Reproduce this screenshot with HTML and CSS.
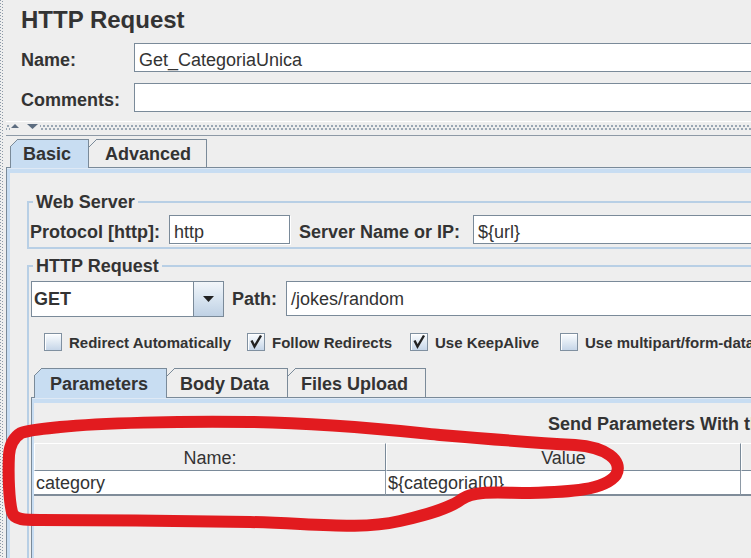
FILE: index.html
```html
<!DOCTYPE html>
<html lang="pt">
<head>
<meta charset="utf-8">
<title>HTTP Request</title>
<link rel="stylesheet" href="styles.css">
</head>
<body>
<div class="app">
  <div class="vsplit"></div>
  <div class="main">
    <div class="head">
      <h1 class="title">HTTP Request</h1>
      <div class="form">
        <span class="lbl">Name:</span>
        <div class="field">Get_CategoriaUnica</div>
        <span class="lbl">Comments:</span>
        <div class="field"></div>
      </div>
    </div>
    <div class="hsplit">
      <svg class="split-arrows" width="30" height="13" viewBox="0 0 30 13">
        <rect x="0" y="0" width="30" height="13" fill="#eeeeee"/>
        <polygon points="1,6 5,2 9,6" fill="#5d6d80"/>
        <polygon points="17,2 28,2 22.5,7" fill="#5d6d80"/>
      </svg>
    </div>

    <div class="tabpane outer">
      <div class="tabstrip">
        <div class="tab-gap"></div>
        <div class="tab sel t-basic">Basic</div>
        <div class="tab next t-adv">Advanced</div>
        <div class="tab-fill"></div>
      </div>
      <div class="tabbody">
        <fieldset class="group ws">
          <legend>Web Server</legend>
          <div class="row">
            <span class="lbl l-proto">Protocol [http]:</span>
            <div class="field f-proto">http</div>
            <span class="lbl l-server">Server Name or IP:</span>
            <div class="field grow">${url}</div>
          </div>
        </fieldset>

        <fieldset class="group req">
          <legend>HTTP Request</legend>
          <div class="row">
            <div class="combo">
              <div class="combo-val">GET</div>
              <div class="combo-btn">
                <svg width="11" height="6" viewBox="0 0 11 6"><polygon points="0,0 11,0 5.5,6" fill="#222"/></svg>
              </div>
            </div>
            <span class="lbl l-path">Path:</span>
            <div class="field tall grow">/jokes/random</div>
          </div>

          <div class="checks">
            <div class="chk"><span class="box"></span><span class="ct">Redirect Automatically</span></div>
            <div class="chk"><span class="box"><svg width="16" height="16" viewBox="0 0 16 16"><polyline points="3.5,6.5 6.5,12.5 13,1.5" fill="none" stroke="#222" stroke-width="2.4"/></svg></span><span class="ct">Follow Redirects</span></div>
            <div class="chk"><span class="box"><svg width="16" height="16" viewBox="0 0 16 16"><polyline points="3.5,6.5 6.5,12.5 13,1.5" fill="none" stroke="#222" stroke-width="2.4"/></svg></span><span class="ct">Use KeepAlive</span></div>
            <div class="chk"><span class="box"></span><span class="ct">Use multipart/form-data</span></div>
          </div>

          <div class="tabpane inner">
            <div class="tabstrip">
              <div class="tab-gap"></div>
              <div class="tab sel t-params">Parameters</div>
              <div class="tab next t-body">Body Data</div>
              <div class="tab next t-files">Files Upload</div>
              <div class="tab-fill"></div>
            </div>
            <div class="tabbody">
              <div class="sendwith">Send Parameters With the Request:</div>
              <table class="params">
                <colgroup><col class="c1"><col class="c2"><col class="c3"></colgroup>
                <thead>
                  <tr><th>Name:</th><th>Value</th><th></th></tr>
                </thead>
                <tbody>
                  <tr><td>category</td><td>${categoria[0]}</td><td></td></tr>
                </tbody>
              </table>
            </div>
          </div>
        </fieldset>
      </div>
    </div>
  </div>
</div>

<svg class="annot" width="751" height="558" viewBox="0 0 751 558">
  <path d="M21,433 C16,436 10,442 9,455 C8,475 9,500 12,512 C14,520 25,520 40,520 C100,520 200,521 250,522 C320,524 360,530 400,521 C430,514 450,508 462,499 C475,490 500,493 530,493 C570,492 605,490 616,475 C624,460 605,447 575,445 C540,443 500,440 440,435 C400,431 330,423 250,422 C180,421 100,423 60,427 C40,429 28,430 21,433" fill="none" stroke="#e21b1f" stroke-width="12" stroke-linecap="round" stroke-linejoin="round"/>
</svg>
</body>
</html>
```

FILE: styles.css
```css
html, body {
  margin: 0;
  padding: 0;
  overflow: hidden;
  background: #eeeeee;
}

body {
  position: relative;
  width: 751px;
  height: 558px;
  font-family: "Liberation Sans", Arial, sans-serif;
  color: #333333;
}

.app {
  display: flex;
  width: 1000px;
  height: 558px;
}

.vsplit {
  flex: none;
  width: 4px;
  height: 100%;
  background-image:
    linear-gradient(#8c99a7 1px, transparent 1px),
    linear-gradient(#8c99a7 1px, transparent 1px);
  background-size: 1px 3px, 1px 3px;
  background-position: 0 0, 2px 1px;
  background-repeat: repeat-y;
}

.main {
  flex: 1;
  min-width: 0;
  padding-left: 2px;
}

/* ---------- header ---------- */
.head {
  padding: 6px 0 0 15px;
}

.title {
  margin: 0;
  font-size: 24px;
  line-height: 28px;
  font-weight: bold;
}

.form {
  display: grid;
  grid-template-columns: 113px 1fr;
  row-gap: 11px;
  margin-top: 9px;
}

.lbl {
  flex: none;
  font-weight: bold;
  font-size: 18px;
  line-height: 23px;
  padding-top: 6px;
  white-space: nowrap;
}

.field {
  height: 29px;
  box-sizing: border-box;
  border: 1px solid #7a8a99;
  background: #ffffff;
  padding: 5px 0 0 4px;
  font-size: 18px;
  line-height: 22px;
  white-space: nowrap;
  overflow: hidden;
}

.grow {
  flex: 1;
  min-width: 0;
}

/* ---------- split divider ---------- */
.hsplit {
  display: flex;
  margin-top: 9px;
  height: 13px;
  padding-left: 4px;
  border-top: 1px solid #ffffff;
  border-bottom: 1px solid #8d99a6;
  background-image:
    linear-gradient(90deg, #9aa7b4 2px, transparent 2px),
    linear-gradient(90deg, #9aa7b4 2px, transparent 2px);
  background-size: 4px 2px, 4px 2px;
  background-position: 1px 3px, 3px 6px;
  background-repeat: repeat-x;
}

.split-arrows {
  display: block;
}

/* ---------- tabbed panes ---------- */
.tabstrip {
  display: flex;
  align-items: flex-end;
}

.outer > .tabstrip {
  padding-top: 3px;
}

.tab-gap {
  flex: none;
  width: 4px;
  height: 0;
  border-bottom: 1px solid #7a8a99;
}

.inner .tab-gap {
  width: 3px;
}

.tab-fill {
  flex: 1;
  height: 0;
  border-bottom: 1px solid #7a8a99;
}

.tab {
  flex: none;
  box-sizing: border-box;
  height: 29px;
  font-weight: bold;
  font-size: 18px;
  line-height: 26px;
  padding-top: 2px;
  white-space: nowrap;
  border-right: 1px solid #7a8a99;
  border-bottom: 1px solid #7a8a99;
  background-color: #eeeeee;
  background-image:
    linear-gradient(to bottom right, #eeeeee 0, #eeeeee calc(50% - 0.7px), #7a8a99 calc(50% - 0.7px), #7a8a99 calc(50% + 0.7px), transparent calc(50% + 0.7px)),
    linear-gradient(#7a8a99, #7a8a99),
    linear-gradient(#7a8a99, #7a8a99);
  background-size: 8px 8px, 100% 1px, 1px 100%;
  background-position: 0 0, 8px 0, 0 8px;
  background-repeat: no-repeat;
}

.tab.next {
  background-image:
    linear-gradient(to bottom right, transparent 0, transparent calc(50% - 0.7px), #7a8a99 calc(50% - 0.7px), #7a8a99 calc(50% + 0.7px), transparent calc(50% + 0.7px)),
    linear-gradient(#7a8a99, #7a8a99);
  background-size: 8px 8px, 100% 1px;
  background-position: 0 0, 8px 0;
  background-color: transparent;
}

.tab.sel {
  border-bottom: none;
  background-color: #c8ddf2;
}

.t-basic { width: 79px; padding-left: 13px; }
.t-adv { width: 118px; padding-left: 16px; }

.inner .tab {
  height: 30px;
  line-height: 26px;
  padding-top: 3px;
}

.inner .tab.sel {
  line-height: 27px;
}

.t-params { width: 133px; padding-left: 16px; }
.t-body { width: 121px; padding-left: 13px; }
.t-files { width: 138px; padding-left: 13px; }

.outer > .tabbody {
  height: 420px;
  padding-top: 23px;
  border-left: 1px solid #7a8a99;
  box-shadow: inset 0 1px 0 #dfe9f5, inset 3px 5px 0 #c8ddf2;
}

.inner > .tabbody {
  height: 200px;
  padding-top: 16px;
  border-left: 1px solid #7a8a99;
  box-shadow: inset 0 1px 0 #dfe9f5, inset 2px 5px 0 #c8ddf2;
}

/* ---------- titled groups ---------- */
.group {
  margin: 0 0 0 20px;
  border: 2px solid #b8cfe5;
  padding: 0 0 3px 1px;
  min-width: 0;
}

.group legend {
  margin-left: 3px;
  padding: 1px 3px 0;
  font-size: 18px;
  font-weight: bold;
  line-height: 20px;
}

.req {
  margin-top: 6px;
  height: 400px;
}

.row {
  display: flex;
  align-items: flex-start;
}

.ws .row {
  margin-top: 3px;
}

.l-proto { width: 139px; }
.f-proto { flex: none; width: 121px; box-shadow: 1px 1px 0 #ffffff; }
.l-server { width: 174px; margin-left: 9px; }

.req .row {
  margin-top: 5px;
}

.combo {
  flex: none;
  display: flex;
  width: 193px;
  height: 36px;
  box-sizing: border-box;
  margin-left: 1px;
  border: 1px solid #7a8a99;
}

.combo-val {
  flex: 1;
  background: #ffffff;
  font-weight: bold;
  font-size: 18px;
  line-height: 33px;
  padding: 1px 0 0 2px;
}

.combo-btn {
  flex: none;
  width: 29px;
  border-left: 1px solid #7a8a99;
  background: linear-gradient(#f2f6fa, #d8e4f0 50%, #bfd1e4);
  display: flex;
  align-items: center;
  justify-content: center;
}

.combo-btn svg {
  display: block;
}

.l-path {
  width: 54px;
  margin-left: 8px;
}

.req .row .lbl {
  line-height: 33px;
  padding-top: 2px;
}

.field.tall {
  height: 35px;
  padding-top: 6px;
}

/* ---------- checkboxes ---------- */
.checks {
  display: grid;
  grid-template-columns: 203px 163px 150px auto;
  margin-top: 16px;
  padding-left: 14px;
}

.chk {
  display: flex;
  align-items: flex-start;
  gap: 7px;
  height: 18px;
  font-weight: bold;
  font-size: 15px;
  white-space: nowrap;
}

.ct {
  line-height: 18px;
  padding-top: 1px;
}

.box {
  flex: none;
  width: 18px;
  height: 18px;
  box-sizing: border-box;
  border: 1px solid #8090a0;
  background: linear-gradient(#fbfdff, #c6d6e8);
  box-shadow: inset 1px 1px 0 #ffffff;
}

.box svg {
  display: block;
}

/* ---------- inner tab pane ---------- */
.inner {
  margin-top: 17px;
  margin-left: 1px;
}

.sendwith {
  margin-left: 516px;
  font-weight: bold;
  font-size: 18px;
  line-height: 20px;
  white-space: nowrap;
}

.params {
  margin: 9px 0 0 2px;
  border-spacing: 0;
  border-collapse: separate;
  table-layout: fixed;
  width: 907px;
  font-size: 18px;
}

.params col.c1 { width: 352px; }
.params col.c2 { width: 355px; }
.params col.c3 { width: 200px; }

.params th {
  box-sizing: border-box;
  background: #eeeeee;
  border-top: 1px solid #ffffff;
  border-left: 1px solid #ffffff;
  border-right: 1px solid #7a8a99;
  border-bottom: 1px solid #7a8a99;
  font-weight: normal;
  line-height: 23px;
  padding: 3px 0 0;
  text-align: center;
  color: #333333;
}

.params td {
  background: #ffffff;
  border-right: 1px solid #8e9aa6;
  border-bottom: 2px solid #7f8c99;
  line-height: 22px;
  padding: 1px 0 0 2px;
  white-space: nowrap;
}

/* ---------- annotation ---------- */
.annot {
  position: absolute;
  top: 0;
  left: 0;
  pointer-events: none;
}
```
